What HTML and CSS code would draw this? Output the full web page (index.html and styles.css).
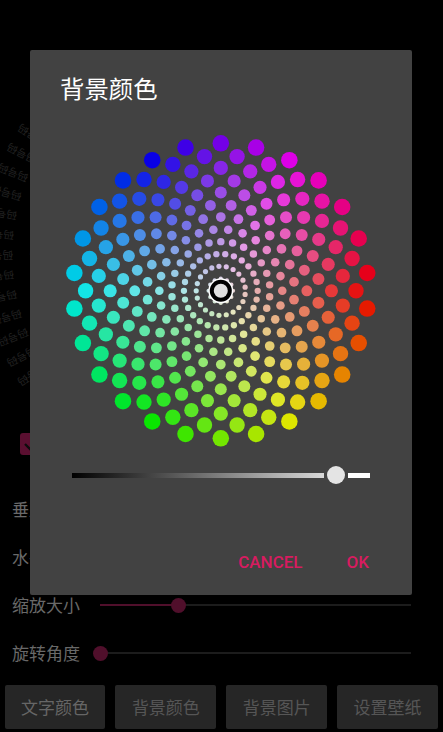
FILE: index.html
```html
<!DOCTYPE html>
<html lang="zh">
<head>
<meta charset="utf-8">
<title>背景颜色</title>
<link rel="stylesheet" href="styles.css">
</head>
<body>
<div class="screen">
  <div class="preview" id="preview"></div>
  <div class="check-row"><span class="check"><svg class="tick" viewBox="0 0 22 22"><path d="M5 11l5 5 9-10" fill="none" stroke="#0c0c0c" stroke-width="2.4"/></svg></span></div>
  <div class="controls">
    <div class="row"><span class="label">垂直偏移</span><div class="track"><i class="fill fill-a"></i><b class="thumb"></b></div></div>
    <div class="row"><span class="label">水平偏移</span><div class="track"><i class="fill fill-a"></i><b class="thumb"></b></div></div>
    <div class="row"><span class="label">缩放大小</span><div class="track"><i class="fill fill-a"></i><b class="thumb"></b></div></div>
    <div class="row"><span class="label">旋转角度</span><div class="track"><b class="thumb"></b></div></div>
  </div>
  <div class="buttons">
    <span class="btn btn-first">文字颜色</span>
    <span class="btn">背景颜色</span>
    <span class="btn">背景图片</span>
    <span class="btn">设置壁纸</span>
  </div>
</div>
<div class="dialog">
  <h1 class="title">背景颜色</h1>
  <svg class="wheel" id="wheel" viewBox="0 0 320 320" xmlns="http://www.w3.org/2000/svg"></svg>
  <div class="lightness">
    <span class="bar"></span>
    <span class="knob"></span>
    <span class="bar-end"></span>
  </div>
  <div class="actions">
    <span class="action">CANCEL</span>
    <span class="action">OK</span>
  </div>
</div>
<script src="script.js"></script>
</body>
</html>
```
FILE: styles.css
```css
* { box-sizing: border-box; }
html, body { margin: 0; padding: 0; }
body {
  width: 443px;
  height: 732px;
  overflow: hidden;
  background: #000;
  position: relative;
  font-family: "Noto Sans CJK SC", "Noto Sans", sans-serif;
}
.screen {
  height: 732px;
  display: flex;
  flex-direction: column;
  padding-top: 48px;
}
.preview {
  height: 385px;
  flex: none;
  position: relative;
  overflow: hidden;
}
.ray {
  position: absolute;
  left: 221px;
  top: 207px;
  width: 0;
  height: 0;
  transform-origin: 0 0;
}
.ray-word {
  position: absolute;
  top: -7px;
  white-space: nowrap;
  font-size: 10.5px;
  line-height: 14px;
  color: #222;
}
.check-row {
  height: 22px;
  flex: none;
  padding-left: 20px;
}
.check {
  display: block;
  width: 22px;
  height: 22px;
  border-radius: 3px;
  background: #5a0f30;
}
.tick { display: block; width: 22px; height: 22px; }
.controls {
  flex: none;
  display: flex;
  flex-direction: column;
  gap: 16px;
  padding: 38px 32px 0 12px;
}
.row {
  height: 32px;
  display: flex;
  align-items: center;
  gap: 19px;
}
.label {
  flex: none;
  width: 69px;
  font-size: 17px;
  line-height: 24px;
  color: #696969;
}
.track {
  flex: 1;
  height: 2px;
  background: #1c1c1c;
  position: relative;
  display: flex;
  align-items: center;
}
.fill { display: block; height: 2px; background: #500f2b; }
.fill-a { width: 78px; }
.thumb {
  display: block;
  flex: none;
  width: 15px;
  height: 15px;
  margin-left: -7px;
  border-radius: 50%;
  background: #500f2b;
}
.buttons {
  flex: none;
  display: flex;
  gap: 10px;
  padding: 16px 5px 0 4.6px;
}
.btn {
  flex: 1;
  height: 44px;
  border-radius: 2px;
  background: #262626;
  color: #565656;
  font-size: 17px;
  line-height: 44px;
  text-align: center;
}
.btn-first { color: #666; }
.dialog {
  position: absolute;
  left: 30px;
  top: 50px;
  width: 382px;
  height: 545px;
  background: #424242;
  border-radius: 2px;
  display: flex;
  flex-direction: column;
}
.title {
  margin: 0;
  padding: 20px 0 0 30px;
  height: 81px;
  color: #fff;
  font-size: 24.4px;
  font-weight: 400;
  line-height: 36px;
}
.wheel {
  display: block;
  flex: none;
  width: 320px;
  height: 320px;
  margin-left: 31px;
}
.lightness {
  margin: 12px 0 0 42px;
  width: 298px;
  height: 24px;
  display: flex;
  align-items: center;
}
.bar {
  display: block;
  width: 252px;
  height: 5px;
  background: linear-gradient(90deg, #000, #fff 118%);
}
.knob {
  display: block;
  width: 18px;
  height: 18px;
  margin: 0 3px;
  border-radius: 50%;
  background: #e4e4e4;
}
.bar-end {
  display: block;
  width: 22px;
  height: 5px;
  background: #fff;
}
.actions {
  display: flex;
  justify-content: flex-end;
  gap: 44px;
  padding: 64px 43px 0 0;
}
.action {
  font-family: Roboto, "Liberation Sans", sans-serif;
  font-weight: 500;
  font-size: 17px;
  line-height: 22px;
  color: #d81b60;
}
```
FILE: script.js
```js
(function () {
  var NS = 'http://www.w3.org/2000/svg';
  var svg = document.getElementById('wheel');
  var DENSITY = 13, MAX_R = 147.5, C = 159.8, VALUE = 0.9, STROKE = 1.0;
  var cSize = MAX_R / (DENSITY - 1) / 2;

  function hsv(h, s, v) {
    var i = Math.floor(h / 60) % 6, f = h / 60 - Math.floor(h / 60);
    var p = v * (1 - s), q = v * (1 - f * s), t = v * (1 - (1 - f) * s);
    var m = [[v, t, p], [q, v, p], [p, v, t], [p, q, v], [t, p, v], [v, p, q]][i];
    return 'rgb(' + m.map(function (x) { return Math.round(x * 255); }).join(',') + ')';
  }
  function circle(x, y, r, fill) {
    var c = document.createElementNS(NS, 'circle');
    c.setAttribute('cx', x.toFixed(2));
    c.setAttribute('cy', y.toFixed(2));
    c.setAttribute('r', r.toFixed(2));
    c.setAttribute('fill', fill);
    svg.appendChild(c);
  }
  for (var i = 0; i < DENSITY; i++) {
    var p = i / (DENSITY - 1);
    var jitter = (i - DENSITY / 2) / DENSITY;
    var radius = MAX_R * p;
    var size = Math.max(1.5 + STROKE, cSize + (i === 0 ? 0 : cSize * 1.2 * jitter));
    var total = i === 0 ? 1 : Math.min(Math.floor(0.975 * Math.PI / Math.asin(Math.min(1, size / radius)) + 0.5), DENSITY * 2);
    for (var j = 0; j < total; j++) {
      var a = Math.PI * 2 * j / total + (Math.PI / total) * ((i + 1) % 2);
      var deg = (a * 180 / Math.PI) % 360;
      circle(C + radius * Math.cos(a), C + radius * Math.sin(a), size - STROKE, hsv(deg, p, VALUE));
    }
  }
  circle(C, C, 12.5, '#fff');
  circle(C, C, 11, '#000');
  circle(C, C, 7, '#e0e0e0');

  var preview = document.getElementById('preview');
  for (var k = -6; k <= 6; k++) {
    var ray = document.createElement('div');
    ray.className = 'ray';
    ray.style.transform = 'rotate(' + (180 + k * 5.4) + 'deg)';
    [[208, '码号码'], [160, '码号码']].forEach(function (w) {
      var s = document.createElement('span');
      s.className = 'ray-word';
      s.style.left = w[0] + 'px';
      s.textContent = w[1];
      ray.appendChild(s);
    });
    preview.appendChild(ray);
  }
})();
```
